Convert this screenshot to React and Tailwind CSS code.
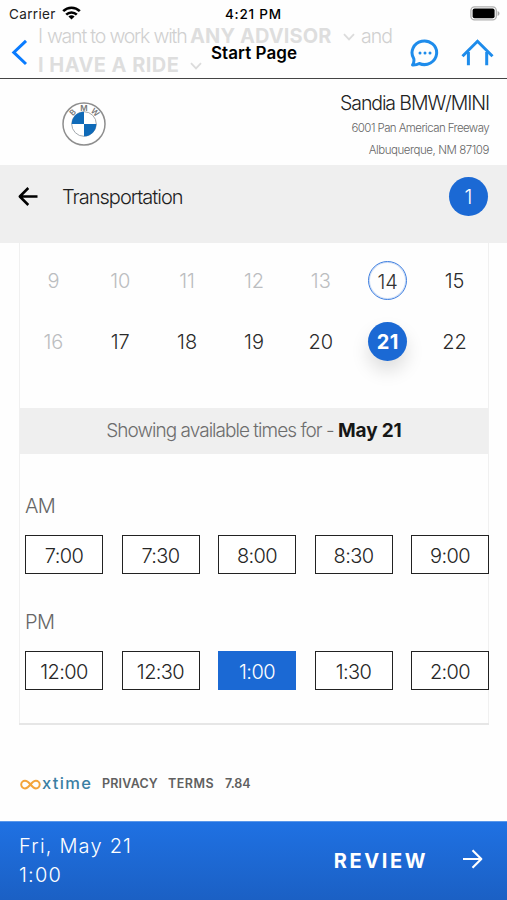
import React from "react";

const WEEKS = [
  [9, 10, 11, 12, 13, 14, 15],
  [16, 17, 18, 19, 20, 21, 22],
];
const TODAY = 14;
const SELECTED = 21;
const CLOSED = [9, 10, 11, 12, 13, 16];

const AM = ["7:00", "7:30", "8:00", "8:30", "9:00"];
const PM = ["12:00", "12:30", "1:00", "1:30", "2:00"];

function Chevron({ className }) {
  return (
    <svg className={className} width="12" height="8" viewBox="0 0 12 8" fill="none" stroke="#dcdcdc" strokeWidth="1.8">
      <path d="M1 1.2 6 6.4 11 1.2" />
    </svg>
  );
}

function StatusBar() {
  return (
    <div className="relative flex h-[27px] items-center justify-between pl-[9px] pr-[7px] font-['Inter',sans-serif] text-[13px] text-black">
      <div className="flex items-center gap-[6px]">
        <span className="pt-px text-[13.5px] tracking-[0.35px] text-[#222]">Carrier</span>
        <svg className="-mt-[2px]" width="19" height="14" viewBox="0 0 19 14" fill="none" stroke="#000" strokeWidth="2.6">
          <path d="M1.2 5.2a11.8 11.8 0 0 1 16.6 0" />
          <path d="M4.2 8.6a7.6 7.6 0 0 1 10.6 0" />
          <path d="M9.5 13.6 6.4 10.6a4.5 4.5 0 0 1 6.2 0Z" fill="#000" stroke="none" />
        </svg>
      </div>
      <span className="absolute left-[225px] whitespace-nowrap pt-px text-[13.5px] font-medium tracking-[0.75px]">4:21 PM</span>
      <svg width="30" height="15" viewBox="0 0 30 15">
        <rect x="0.9" y="0.9" width="25.4" height="13" rx="3.6" fill="#fff" stroke="#b0b0b0" strokeWidth="1.3" />
        <rect x="2.6" y="2.6" width="22" height="9.6" rx="2" fill="#000" />
        <path d="M27.6 5v5c1.1-.4 1.9-1.3 1.9-2.5S28.7 5.4 27.6 5Z" fill="#a9a9a9" />
      </svg>
    </div>
  );
}

function NavBar() {
  return (
    <div className="relative flex h-[51px] items-start justify-between pl-[11px] pr-[13px]">
      <svg className="mt-[12px]" width="17" height="27" viewBox="0 0 17 27" fill="none" stroke="#0a7cff" strokeWidth="3">
        <path d="M15 1.8 2.8 13.4 15 25" />
      </svg>
      <span className="absolute left-[211px] top-[14px] whitespace-nowrap text-[17px] font-semibold leading-6 tracking-[0.05px] text-black">
        Start Page
      </span>
      <div className="flex items-start gap-[22px]">
        <svg className="mt-[12px]" width="30" height="28" viewBox="0 0 30 28" fill="none" stroke="#1e8ceb" strokeWidth="3">
          <path d="M3.5 26C4.9 24 5.2 22 4.8 19.8A12.3 11.8 0 1 1 10.3 24.5C8.3 25.7 6 26.1 3.5 26Z" strokeLinejoin="round" />
          <g fill="#1e8ceb" stroke="none">
            <circle cx="11" cy="14" r="1.5" />
            <circle cx="16" cy="14" r="1.5" />
            <circle cx="21" cy="14" r="1.5" />
          </g>
        </svg>
        <svg className="mt-[12px]" width="33" height="27" viewBox="0 0 33 27" fill="none" stroke="#1e8ceb" strokeWidth="3">
          <path d="M1.5 17.3 16.5 2.3 31.5 17.3" />
          <path d="M7.4 13V26.3M25.7 13V26.3" />
        </svg>
      </div>
    </div>
  );
}

function BmwLogo() {
  return (
    <svg width="44" height="44" viewBox="0 0 44 44">
      <circle cx="22" cy="22" r="21" fill="#fff" stroke="#8e8e8e" strokeWidth="1.5" />
      <circle cx="22" cy="22" r="12.3" fill="#fff" stroke="#a3a9ae" strokeWidth="1" />
      <path d="M22 22V9.7A12.3 12.3 0 0 0 9.7 22Z" fill="#0f6ab8" />
      <path d="M22 22V34.3A12.3 12.3 0 0 0 34.3 22Z" fill="#0f6ab8" />
      <g fill="#777" fontFamily="Inter, sans-serif" fontSize="8" fontWeight="600" textAnchor="middle">
        <text x="22" y="8.6">M</text>
        <text x="22" y="8.6" transform="rotate(-44 22 22)">B</text>
        <text x="22" y="8.6" transform="rotate(44 22 22)">W</text>
      </g>
    </svg>
  );
}

function Day({ day }) {
  if (day === SELECTED) {
    return (
      <span className="flex size-[39px] items-center justify-center rounded-full bg-[#1b69d4] text-[20px] font-bold tracking-[0.4px] text-white shadow-[0_10px_18px_rgba(0,0,0,0.13)]">
        {day}
      </span>
    );
  }
  if (day === TODAY) {
    return (
      <span className="flex size-[39px] items-center justify-center rounded-full border border-[#3f7fe0] pt-[2px] text-[20px] text-[#333] ring-1 ring-inset ring-[#3f7fe0]/25">
        {day}
      </span>
    );
  }
  return <span className={CLOSED.includes(day) ? "text-[20px] text-[#bbbdc0]" : "text-[20px] text-[#2b2b2b]"}>{day}</span>;
}

function Times({ label, times, selected }) {
  return (
    <section className="pl-[5px]">
      <h3 className="h-[29px] text-[20px] font-light leading-[29px] tracking-[-0.6px] text-[#666]">{label}</h3>
      <div className="mt-[14px] flex w-[464px] justify-between">
        {times.map((t) => (
          <button
            key={t}
            className={
              t === selected
                ? "h-[39px] w-[78px] bg-[#1b69d4] pt-[2px] text-[20px] font-light tracking-[-0.6px] text-white"
                : "h-[39px] w-[78px] border border-[#222] bg-white pt-[2px] text-[20px] font-light tracking-[-0.6px] text-[#262626]"
            }
          >
            {t}
          </button>
        ))}
      </div>
    </section>
  );
}

export default function App() {
  return (
    <div className="flex h-[900px] w-[507px] flex-col overflow-hidden bg-[#fefefe] font-['Inter',sans-serif]">
      <header className="relative h-[79px] shrink-0 border-b border-[#444]">
        <div className="absolute left-[38px] top-[22px] whitespace-nowrap text-[20px] font-light leading-[29px] text-[#d0d0d0]">
          <div className="flex items-center">
            <span className="w-[152px] text-[19.5px] tracking-[-1.2px]">
              <span className="tracking-[-0.5px]">I</span> want to work with
            </span>
            <span className="w-[153px] font-bold tracking-[0.1px] text-[#dedede]">ANY ADVISOR</span>
            <Chevron className="mr-[6px]" />
            <span className="text-[19.5px] tracking-[-1px]">and</span>
          </div>
          <div className="flex items-center">
            <span className="w-[152px] font-bold tracking-[0.45px] text-[#dedede]">I HAVE A RIDE</span>
            <Chevron />
          </div>
        </div>
        <StatusBar />
        <NavBar />
      </header>

      <div className="flex h-[86px] shrink-0 justify-between pl-[62px] pr-[18px]">
        <div className="pt-[23px]">
          <BmwLogo />
        </div>
        <div className="flex flex-col items-end pt-[11px] font-light">
          <div className="text-[19.5px] leading-[26px] tracking-[-1.1px] text-[#222]">Sandia BMW/MINI</div>
          <div className="pt-px text-[11.5px] leading-[22px] tracking-[-0.58px] text-[#666]">6001 Pan American Freeway</div>
          <div className="text-[11.5px] leading-[22px] tracking-[-0.44px] text-[#666]">Albuquerque, NM 87109</div>
        </div>
      </div>

      <div className="flex h-[78px] shrink-0 items-start bg-[#efefef] pl-[18px] pr-[19px] pt-[12px]">
        <div className="flex h-[39px] flex-1 items-center">
          <svg width="20" height="19" viewBox="0 0 20 19" fill="none" stroke="#000" strokeWidth="2.5">
            <path d="M1.8 9.5H19.5M10.3 1 1.8 9.5 10.3 18" strokeLinejoin="round" />
          </svg>
          <h1 className="ml-[24px] text-[20px] font-light tracking-[-1px] text-[#1f1f1f]">Transportation</h1>
        </div>
        <span className="flex size-[39px] items-center justify-center rounded-full bg-[#1b69d4] text-[20px] font-light text-white">1</span>
      </div>

      <main className="ml-[19px] flex h-[480px] w-[470px] shrink-0 flex-col border-x border-[#f0f0f0] shadow-[0_2px_0_#e6e6e6]">
        <div className="flex h-[165px] flex-col pt-[7px] font-light">
          {WEEKS.map((week) => (
            <div key={week[0]} className="-mr-px grid h-[61px] grid-cols-7 pr-px">
              {week.map((d) => (
                <div key={d} className="flex items-center justify-center">
                  <Day day={d} />
                </div>
              ))}
            </div>
          ))}
        </div>
        <div className="flex h-[46px] items-center justify-center bg-[#efefef] pt-px text-[19px] font-light tracking-[-0.97px] text-[#6d6d6d]">
          <span>Showing available times for -&nbsp;</span>
          <span className="font-bold tracking-[-0.15px] text-[#161616]">May 21</span>
        </div>
        <div className="flex flex-col gap-[34px] pt-[38px]">
          <Times label="AM" times={AM} />
          <Times label="PM" times={PM} selected="1:00" />
        </div>
      </main>

      <footer className="flex min-h-0 flex-1 items-center pl-[20px] pt-[23px] text-[12.5px] font-semibold text-[#606060]">
        <svg width="22" height="16" viewBox="0 0 22 16">
          <path
            d="M10.5 8.5C8.5 6.1 7.2 4.8 5 4.8a3.7 3.7 0 0 0 0 7.6c2.2 0 3.5-1.5 5.5-3.9s3.4-3.7 5.4-3.7a3.7 3.7 0 0 1 0 7.6c-2 0-3.4-1.5-5.4-3.9Z"
            fill="none"
            stroke="#f3a43b"
            strokeWidth="2"
          />
        </svg>
        <span className="w-[60px] -translate-y-px whitespace-nowrap text-[16.5px] font-medium leading-5 tracking-[1.35px] text-[#3a7fa3]">xtime</span>
        <span className="w-[66px] pt-px tracking-[0.2px]">PRIVACY</span>
        <span className="w-[57px] pt-px tracking-[0.5px]">TERMS</span>
        <span className="pt-px">7.84</span>
      </footer>

      <div className="flex h-[79px] shrink-0 items-center border-t border-[#5a97ea] bg-linear-to-b from-[#1f71e3] to-[#1b60c4] pl-[19px] pr-[24px] text-white">
        <div className="flex-1 text-[20px] font-light leading-[29px] tracking-[1.2px]">
          <div>Fri, May 21</div>
          <div>1:00</div>
        </div>
        <span className="text-[20px] font-bold tracking-[2.6px]">REVIEW</span>
        <svg className="-mt-[4px] ml-[35px]" width="20" height="20" viewBox="0 0 20 20" fill="none" stroke="#fff" strokeWidth="2.2">
          <path d="M0 10H18M9.500 1.3 18.3 10 9.5 18.7" strokeLinejoin="round" />
        </svg>
      </div>
    </div>
  );
}
